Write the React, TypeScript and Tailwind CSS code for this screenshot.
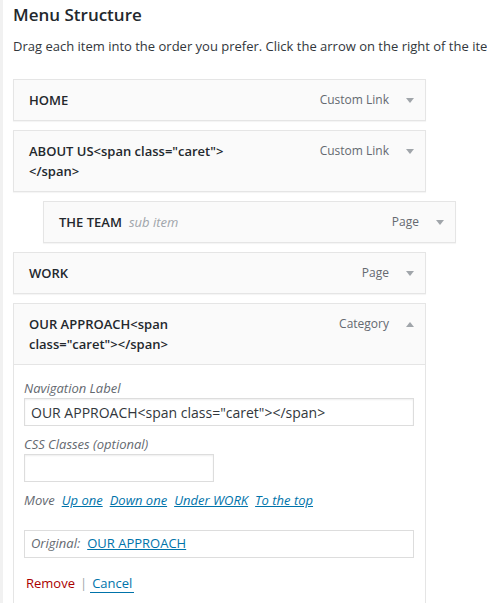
import React from 'react';

type ItemProps = {
  lines: string[];
  type: string;
  sub?: boolean;
  open?: boolean;
};

function Arrow({ up }: { up?: boolean }) {
  return (
    <svg width="8" height="5" viewBox="0 0 8 5">
      <path d={up ? 'M0 5 L4 0 L8 5 Z' : 'M0 0 L8 0 L4 5 Z'} fill="#a0a5aa" />
    </svg>
  );
}

function ItemHeader({ lines, type, sub, open }: ItemProps) {
  return (
    <div
      className={`flex items-start py-[10px] pl-[15px] pr-[11px] bg-[#fafafa] ${
        open ? 'border-b border-[#e5e5e5]' : ''
      }`}
    >
      <div className="flex-1 text-[13px] leading-[20px] font-semibold text-[#23282d]">
        {lines.map((l, i) => (
          <div key={i}>
            {l}
            {sub && i === 0 && (
              <span className="ml-[7px] font-normal italic text-[#a0a5aa]">sub item</span>
            )}
          </div>
        ))}
      </div>
      <span className="text-[12px] leading-[20px] text-[#646970]">{type}</span>
      <span className="ml-[17px] w-[8px] h-[20px] flex items-center">
        <Arrow up={open} />
      </span>
    </div>
  );
}

function MenuItem(props: ItemProps) {
  return (
    <div
      className={`${props.sub ? 'ml-[30px]' : ''} w-[413px] border border-[#e5e5e5] shadow-[0_1px_1px_rgba(0,0,0,0.04)]`}
    >
      <ItemHeader {...props} />
    </div>
  );
}

export default function App() {
  return (
    <div
      className="w-[487px] h-[603px] overflow-hidden bg-white border-l-[3px] border-[#f1f1f1] pl-[10px] text-[#23282d]"
      style={{ fontFamily: '"Open Sans", "Liberation Sans", sans-serif' }}
    >
      <h2 className="mt-[4px] text-[17px] leading-[22px] font-semibold">Menu Structure</h2>
      <p className="mt-[11px] text-[13px] leading-[19px] whitespace-nowrap text-[#32373c]">
        Drag each item into the order you prefer. Click the arrow on the right of the item to
        reveal additional configuration options.
      </p>

      <div className="mt-[23px] flex flex-col gap-[9px]">
        <MenuItem lines={['HOME']} type="Custom Link" />
        <MenuItem lines={['ABOUT US<span class="caret">', '</span>']} type="Custom Link" />
        <MenuItem lines={['THE TEAM']} type="Page" sub />
        <MenuItem lines={['WORK']} type="Page" />

        <div className="w-[413px] border-x border-t border-[#e5e5e5]">
          <ItemHeader
            lines={['OUR APPROACH<span', 'class="caret"></span>']}
            type="Category"
            open
          />
          <div className="bg-white px-[10px] pt-[14px] pb-[20px]">
            <div className="text-[13px] leading-[19px] italic text-[#646970]">Navigation Label</div>
            <div className="w-[390px] h-[28px] border border-[#dddddd] px-[6px] flex items-center text-[14px] text-[#32373c] shadow-[inset_0_1px_2px_rgba(0,0,0,0.07)]">
              OUR APPROACH&lt;span class="caret"&gt;&lt;/span&gt;
            </div>

            <div className="mt-[9px] text-[13px] leading-[19px] italic text-[#646970]">
              CSS Classes (optional)
            </div>
            <div className="w-[190px] h-[28px] border border-[#dddddd] shadow-[inset_0_1px_2px_rgba(0,0,0,0.07)]" />

            <div className="mt-[9px] flex gap-[7px] text-[13px] leading-[19px] italic">
              <span className="text-[#646970]">Move</span>
              <span className="text-[#0073aa] underline">Up one</span>
              <span className="text-[#0073aa] underline">Down one</span>
              <span className="text-[#0073aa] underline">Under WORK</span>
              <span className="text-[#0073aa] underline">To the top</span>
            </div>

            <div className="mt-[20px] w-[390px] h-[28px] border border-[#dddddd] px-[6px] flex items-center text-[13px]">
              <span className="italic text-[#646970]">Original:</span>
              <span className="ml-[7px] text-[#0073aa] underline">OUR APPROACH</span>
            </div>

            <div className="mt-[16px] flex items-center text-[13px] leading-[19px] pl-[2px]">
              <span className="text-[#a00]">Remove</span>
              <span className="ml-[5px] mr-[3px] text-[#a0a5aa]">|</span>
              <span className="px-[2px] text-[#0073aa] border-b border-[#0073aa] leading-[18px]">
                Cancel
              </span>
            </div>
          </div>
        </div>
      </div>
    </div>
  );
}
